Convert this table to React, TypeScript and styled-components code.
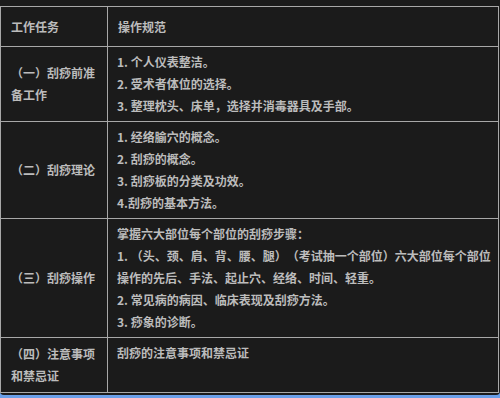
import styled, { createGlobalStyle } from "styled-components";

const GlobalStyle = createGlobalStyle`
  html, body {
    margin: 0;
    padding: 0;
    background: #6a9fe8;
  }
`;

const Frame = styled.div`
  box-sizing: border-box;
  width: 500px;
  height: 395px;
  padding-top: 6px;
  background: #1b1b1b;
  border-radius: 0 0 4px 4px;
  overflow: hidden;
  font-family: "Noto Sans CJK SC", "Noto Sans", sans-serif;
  font-size: 12px;
  font-weight: 700;
  color: #bcbcbc;
  text-spacing-trim: space-all;
  font-kerning: none;
`;

const Table = styled.table`
  width: 499px;
  border-collapse: collapse;
  table-layout: fixed;
`;

const HeadCell = styled.th<{ $width?: number }>`
  box-sizing: border-box;
  width: ${(p) => (p.$width ? `${p.$width}px` : "auto")};
  height: 40px;
  padding: 0 9px 0 10px;
  border: 1px solid #a8a8a8;
  text-align: left;
  font-weight: 700;
  line-height: 22px;
  vertical-align: middle;
`;

const TaskCell = styled.td`
  padding: 4px 9px 4px 10px;
  border: 1px solid #a8a8a8;
  line-height: 22px;
  vertical-align: middle;
`;

const SpecCell = styled.td<{ $top?: boolean }>`
  padding: 4px 8px 4px 9px;
  border: 1px solid #a8a8a8;
  vertical-align: ${(p) => (p.$top ? "top" : "middle")};
`;

const Row = styled.tr<{ $height?: number }>`
  height: ${(p) => (p.$height ? `${p.$height}px` : "auto")};
`;

const Line = styled.p`
  margin: 0;
  height: 22px;
  line-height: 22px;
  white-space: nowrap;
`;

const rows: { task: string; items: string[]; top?: boolean; height?: number }[] = [
  {
    task: "（一）刮痧前准备工作",
    items: ["1. 个人仪表整洁。", "2. 受术者体位的选择。", "3. 整理枕头、床单，选择并消毒器具及手部。"],
  },
  {
    task: "（二）刮痧理论",
    items: ["1. 经络腧穴的概念。", "2. 刮痧的概念。", "3. 刮痧板的分类及功效。", "4.刮痧的基本方法。"],
  },
  {
    task: "（三）刮痧操作",
    items: [
      "掌握六大部位每个部位的刮痧步骤：",
      "1. （头、颈、肩、背、腰、腿）（考试抽一个部位）六大部位每个部位",
      "操作的先后、手法、起止穴、经络、时间、轻重。",
      "2. 常见病的病因、临床表现及刮痧方法。",
      "3. 痧象的诊断。",
    ],
  },
  {
    task: "（四）注意事项和禁忌证",
    items: ["刮痧的注意事项和禁忌证"],
    top: true,
    height: 55,
  },
];

export default function App() {
  return (
    <>
      <GlobalStyle />
      <Frame>
        <Table>
          <thead>
            <tr>
              <HeadCell $width={107}>工作任务</HeadCell>
              <HeadCell>操作规范</HeadCell>
            </tr>
          </thead>
          <tbody>
            {rows.map((row) => (
              <Row key={row.task} $height={row.height}>
                <TaskCell>{row.task}</TaskCell>
                <SpecCell $top={row.top}>
                  {row.items.map((item) => (
                    <Line key={item}>{item}</Line>
                  ))}
                </SpecCell>
              </Row>
            ))}
          </tbody>
        </Table>
      </Frame>
    </>
  );
}
